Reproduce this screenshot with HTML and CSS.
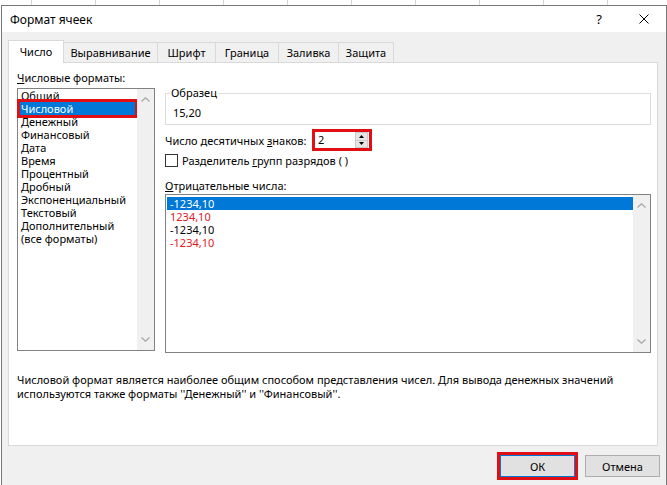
FILE: index.html
```html
<!DOCTYPE html>
<html lang="ru">
<head>
<meta charset="utf-8">
<title>Формат ячеек</title>
<link rel="stylesheet" href="styles.css">
</head>
<body>
<div class="sheet-strip"></div>
<div class="dialog">
  <div class="titlebar">
    <span class="title">Формат ячеек</span>
    <span class="help">?</span>
    <svg class="close" width="10" height="10" viewBox="0 0 10 10"><path d="M0.5 0.5L9.5 9.5M9.5 0.5L0.5 9.5" stroke="#000" stroke-width="1" fill="none"/></svg>
  </div>
  <div class="dlg-body">
    <div class="tabs">
      <div class="tab active">Число</div>
      <div class="tab">Выравнивание</div>
      <div class="tab">Шрифт</div>
      <div class="tab">Граница</div>
      <div class="tab">Заливка</div>
      <div class="tab">Защита</div>
    </div>
    <div class="panel">
      <div class="panel-grid">
        <div class="col-left">
          <div class="field-label"><u>Ч</u>исловые форматы:</div>
          <div class="listbox formats">
            <ul class="items">
              <li>Общий</li>
              <li class="sel marked">Числовой</li>
              <li>Денежный</li>
              <li>Финансовый</li>
              <li>Дата</li>
              <li>Время</li>
              <li>Процентный</li>
              <li>Дробный</li>
              <li>Экспоненциальный</li>
              <li>Текстовый</li>
              <li>Дополнительный</li>
              <li>(все форматы)</li>
            </ul>
            <div class="vscroll">
              <svg width="9" height="5" viewBox="0 0 9 5"><path d="M0.5 4.5L4.5 0.8L8.5 4.5" stroke="#a6a6a6" stroke-width="1.2" fill="none"/></svg>
              <svg width="9" height="5" viewBox="0 0 9 5"><path d="M0.5 0.5L4.5 4.2L8.5 0.5" stroke="#a6a6a6" stroke-width="1.2" fill="none"/></svg>
            </div>
          </div>
        </div>
        <div class="col-right">
          <fieldset class="sample-box">
            <legend>Образец</legend>
            <div class="sample">15,20</div>
          </fieldset>
          <div class="dec-row">
            <span class="dec-label">Число десятичных <u>з</u>наков:</span>
            <div class="spin">
              <span class="spin-val">2</span>
              <div class="spin-btns">
                <span class="spin-btn"><svg width="5" height="3" viewBox="0 0 5 3"><path d="M0 3L2.5 0L5 3Z" fill="#000"/></svg></span>
                <span class="spin-btn"><svg width="5" height="3" viewBox="0 0 5 3"><path d="M0 0L2.5 3L5 0Z" fill="#000"/></svg></span>
              </div>
            </div>
          </div>
          <div class="cb-row">
            <span class="cb"></span>
            <span>Разделитель <u>г</u>рупп разрядов ( )</span>
          </div>
          <div class="field-label neg-label"><u>О</u>трицательные числа:</div>
          <div class="listbox neg">
            <ul class="items">
              <li class="sel">-1234,10</li>
              <li class="red">1234,10</li>
              <li>-1234,10</li>
              <li class="red">-1234,10</li>
            </ul>
            <div class="vscroll">
              <svg width="9" height="5" viewBox="0 0 9 5"><path d="M0.5 4.5L4.5 0.8L8.5 4.5" stroke="#a6a6a6" stroke-width="1.2" fill="none"/></svg>
              <svg width="9" height="5" viewBox="0 0 9 5"><path d="M0.5 0.5L4.5 4.2L8.5 0.5" stroke="#a6a6a6" stroke-width="1.2" fill="none"/></svg>
            </div>
          </div>
        </div>
      </div>
      <p class="desc">Числовой формат является наиболее общим способом представления чисел. Для вывода денежных значений<br>используются также форматы ''Денежный'' и ''Финансовый''.</p>
    </div>
    <div class="btn-row">
      <button class="btn default">ОК</button>
      <button class="btn">Отмена</button>
    </div>
  </div>
</div>
</body>
</html>
```

FILE: styles.css
```css
* { box-sizing: border-box; }
html, body { margin: 0; padding: 0; }
body {
  width: 667px;
  height: 485px;
  overflow: hidden;
  background: #ffffff;
  font-family: "Noto Sans", "Open Sans", sans-serif;
  font-size: 11px;
  color: #000;
}
.sheet-strip {
  height: 5px;
  background: repeating-linear-gradient(to right, #ffffff 0 31px, #d6d6d6 31px 32px, #ffffff 32px 64px);
}
.dialog {
  margin-left: 1px;
  width: 666px;
  height: 480px;
  border: 1px solid #777777;
  border-bottom: none;
  background: #f0f0f0;
}
.titlebar {
  height: 26px;
  background: #ffffff;
  display: flex;
  align-items: center;
  padding: 0 17px 0 8px;
  font-size: 12px;
}
.title { flex: 1; }
.help {
  font-size: 13px;
  width: 8px;
  text-align: center;
  margin-right: 36px;
}
.close { display: block; }
.dlg-body { padding: 8px 0 0 6px; }
.tabs {
  display: grid;
  grid-template-columns: 56px 94px 58px 63px 60px 55px;
  align-items: end;
  height: 22px;
}
.tab {
  height: 20px;
  border: 1px solid #d9d9d9;
  border-left: none;
  border-bottom: none;
  background: #f0f0f0;
  text-align: center;
  padding-top: 3px;
  line-height: 14px;
  white-space: nowrap;
}
.tab.active {
  height: 23px;
  margin-bottom: -1px;
  background: #ffffff;
  border-left: 1px solid #d9d9d9;
  padding-top: 4px;
  position: relative;
  z-index: 1;
}
.panel {
  width: 650px;
  height: 384px;
  background: #ffffff;
  border: 1px solid #d9d9d9;
  padding: 8px 6px 0 8px;
}
.panel-grid {
  display: grid;
  grid-template-columns: 138px 486px;
  column-gap: 10px;
  align-items: start;
}
.field-label { line-height: 14px; white-space: nowrap; }
.listbox {
  border: 1px solid #828282;
  background: #ffffff;
  display: flex;
}
.formats { height: 263px; margin-top: 3px; }
.items {
  flex: 1;
  list-style: none;
  margin: 0;
  padding: 0 2px 0 2px;
}
.items li {
  height: 13px;
  line-height: 13px;
  padding-left: 1px;
  white-space: nowrap;
}
.items li.sel { background: #0078d7; color: #ffffff; }
.items li.marked { outline: 3px solid #e10f14; }
.items li.red { color: #e3191e; }
.vscroll {
  width: 17px;
  background: #f0f0f0;
  display: flex;
  flex-direction: column;
  justify-content: space-between;
  align-items: center;
  padding: 8px 0 8px;
}
.vscroll svg { display: block; }
.col-right { padding-top: 15px; }
.sample-box {
  margin: 0;
  min-width: 0;
  padding: 6px 6px 4px 6px;
  border: 1px solid #dcdcdc;
}
.sample-box legend {
  padding: 0 1px;
  margin-left: -2px;
  line-height: 14px;
}
.sample { line-height: 14px; padding-left: 1px; }
.dec-row {
  display: flex;
  align-items: center;
  margin-top: 4px;
  height: 22px;
}
.dec-label { width: 147px; white-space: nowrap; }
.spin {
  width: 60px;
  height: 22px;
  border: 3px solid #e10f14;
  background: #ffffff;
  display: flex;
}
.spin-val { flex: 1; padding-left: 3px; line-height: 16px; }
.spin-btns {
  width: 13px;
  margin-right: 1px;
  display: flex;
  flex-direction: column;
}
.spin-btn {
  flex: 1;
  background: #e6e6e6;
  border: 1px solid #cccccc;
  display: flex;
  align-items: center;
  justify-content: center;
}
.spin-btn + .spin-btn { border-top: none; }
.spin-btn svg { display: block; }
.cb-row {
  display: flex;
  align-items: center;
  gap: 4px;
  margin-top: 3px;
  height: 13px;
  line-height: 14px;
}
.cb {
  width: 13px;
  height: 13px;
  border: 1px solid #333333;
  background: #ffffff;
}
.neg-label { margin-top: 12px; }
.neg { height: 159px; margin-top: 1px; }
.neg .items { padding: 2px 0 0 1px; }
.neg .items li { padding-left: 3px; }
.desc {
  margin: 20px 0 0;
  line-height: 14px;
  white-space: nowrap;
}
.btn-row {
  display: flex;
  justify-content: flex-end;
  gap: 10px;
  padding-right: 6px;
  margin-top: 9px;
}
.btn {
  width: 75px;
  height: 22px;
  background: #e1e1e1;
  border: 1px solid #adadad;
  font: inherit;
  color: #000;
  padding: 0;
}
.btn.default {
  border-color: #0078d7;
  outline: 3px solid #e10f14;
}
```
